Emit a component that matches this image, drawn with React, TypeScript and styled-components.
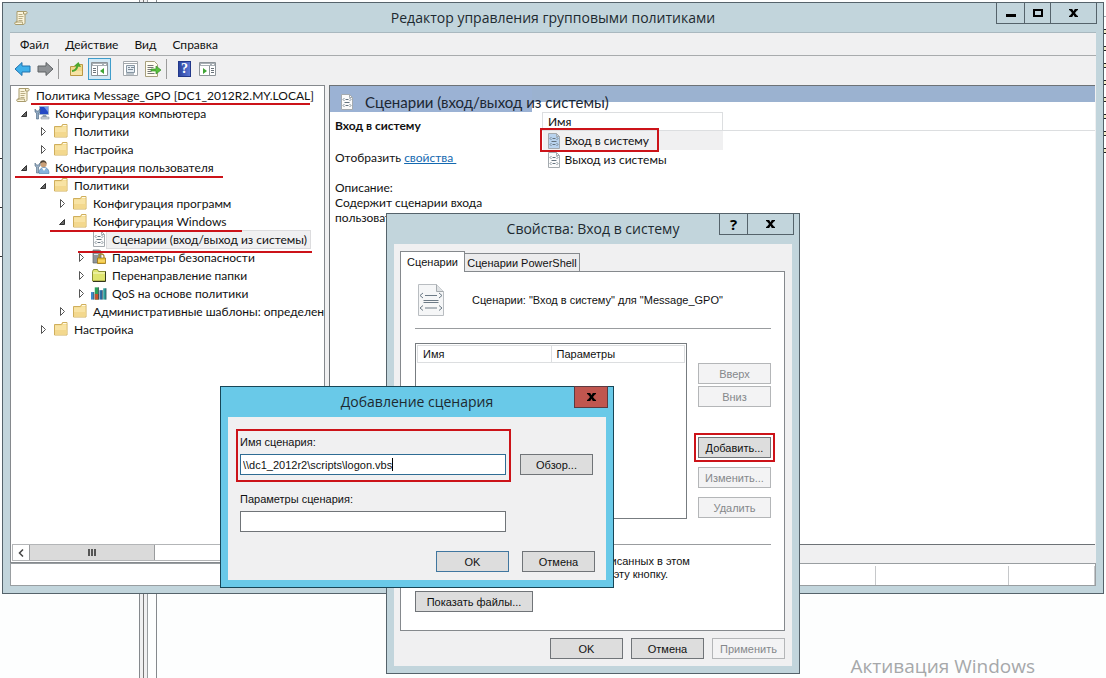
import React from 'react';
import styled, { createGlobalStyle, css } from 'styled-components';

const ui = '"Open Sans", "Noto Sans", sans-serif';
const compact = 'Lato, "Open Sans", sans-serif';
const classic = '"Liberation Sans", Arial, sans-serif';
const red = '#cc1319';

const GlobalStyle = createGlobalStyle`
  * { box-sizing: border-box; }
  body { margin: 0; background: #fdfefe; color: #111; font: 12px/18px ${ui}; }
  button, input { font: inherit; color: inherit; margin: 0; }
`;

/* ---------- desktop ---------- */

const Desktop = styled.main`
  position: relative;
  min-height: 100vh;
  overflow: hidden;
`;

const BackWindow = styled.div`
  display: flex;
  justify-content: space-between;
  height: 100vh;
`;

const BackEdge = styled.div`
  width: 2px;
  padding-top: 158px;
  display: flex;
  flex-direction: column;
  gap: 48px;
`;

const BackRight = styled.div`
  width: 2px;
  margin-top: 16px;
  height: 140px;
  border-top: 1px solid #9aa7ad;
  background: repeating-linear-gradient(#fff 0 12px, #222 12px 13px, #f3edc9 13px 16px, #222 16px 17px);
`;

const Tick = styled.i`
  height: 1px;
  background: #333;
`;

const BackSplit = styled.div`
  flex: 1;
  display: flex;
  padding-left: 137px;
`;

const Rule = styled.i<{ $gap: number; $tone: string }>`
  width: 1px;
  margin-right: ${(p) => p.$gap}px;
  background: ${(p) => p.$tone};
`;

const Gutter = styled.i`
  width: 3px;
  background: #f0f0f1;
`;

const Watermark = styled.p`
  position: absolute;
  right: 71px;
  bottom: 0;
  margin: 0;
  font-size: 19px;
  line-height: 24px;
  color: #a6a8aa;
`;

/* ---------- windows ---------- */

type Tone = 'grey' | 'blue';

const Frame = styled.section<{ $tone: Tone }>`
  position: absolute;
  display: flex;
  flex-direction: column;
  padding: 0 7px 7px;
  border: 1px solid ${(p) => (p.$tone === 'blue' ? '#174657' : '#55636b')};
  background: ${(p) => (p.$tone === 'blue' ? '#69c9e8' : '#c2d5dc')};
`;

const MainFrame = styled(Frame)`
  left: 2px;
  right: 2px;
  top: 2px;
  bottom: 84px;
`;

const PropsFrame = styled(Frame)`
  left: 386px;
  top: 213px;
  width: 414px;
`;

const AddFrame = styled(Frame)`
  left: 220px;
  top: 386px;
  width: 394px;
`;

const TitleBar = styled.header<{ $height?: number }>`
  position: relative;
  display: flex;
  align-items: center;
  justify-content: center;
  height: ${(p) => p.$height ?? 30}px;
  flex: none;
`;

const Title = styled.h1`
  margin: 0;
  font-size: 14px;
  line-height: 20px;
  font-weight: 400;
  color: #1d2a30;
`;

const AppIcon = styled.span`
  position: absolute;
  left: 3px;
  top: 7px;
  display: flex;
`;

const Controls = styled.div<{ $right: number }>`
  position: absolute;
  top: -1px;
  right: ${(p) => p.$right}px;
  display: flex;
`;

const Control = styled.button<{ $width: number; $danger?: boolean }>`
  display: flex;
  align-items: center;
  justify-content: center;
  width: ${(p) => p.$width}px;
  height: 22px;
  margin-left: -1px;
  padding: 0;
  border: 1px solid ${(p) => (p.$danger ? '#5c3a40' : '#55636b')};
  background: ${(p) => (p.$danger ? '#c0564f' : 'transparent')};
  font: 700 15px/18px ${ui};
  color: #000;
`;

const Client = styled.div`
  flex: 1;
  min-height: 0;
  display: flex;
  flex-direction: column;
  background: #f0f0f1;
`;

/* ---------- main window ---------- */

const MenuBar = styled.nav`
  display: flex;
  gap: 16px;
  height: 24px;
  padding: 1px 10px 0;
  border-top: 1px solid #a9b8bf;
  border-bottom: 1px solid #a8abad;
  font-family: ${compact};
`;

const MenuItem = styled.button`
  padding: 0;
  border: 0;
  background: none;
  line-height: 18px;
`;

const Toolbar = styled.div`
  display: flex;
  align-items: center;
  height: 29px;
  padding: 0 1px 3px;
`;

const Tool = styled.button<{ $on?: boolean }>`
  display: flex;
  align-items: center;
  justify-content: center;
  width: 23px;
  height: 22px;
  padding: 0;
  border: 1px solid ${(p) => (p.$on ? '#3f9dcb' : 'transparent')};
  background: ${(p) => (p.$on ? '#d3e9f5' : 'none')};
  margin-right: ${(p) => (p.$on ? 8 : 0)}px;
`;

const ToolSep = styled.i`
  width: 1px;
  height: 20px;
  margin: 0 6px 0 1px;
  background: #9b9b9b;
`;

const Panes = styled.div`
  flex: 1;
  min-height: 0;
  display: flex;
  gap: 4px;
`;

const TreePane = styled.div`
  display: flex;
  flex-direction: column;
  width: 315px;
  flex: none;
  border: 1px solid #85898d;
  background: #fff;
  font-family: ${compact};
`;

const Tree = styled.ul`
  flex: 1;
  margin: 0;
  padding: 0;
  list-style: none;
`;

const TreeRow = styled.li<{ $level: number }>`
  position: relative;
  display: flex;
  align-items: center;
  height: 18px;
  padding-left: ${(p) => (p.$level ? 19 * p.$level - 11 : 4)}px;
`;

const Arrow = styled.span`
  display: flex;
  flex: none;
  width: 15px;
`;

const IconBox = styled.span`
  display: flex;
  flex: none;
  width: 16px;
`;

const NodeLabel = styled.span<{ $selected?: boolean }>`
  white-space: nowrap;
  line-height: 17px;
  padding: 0 3px 0 5px;
  ${(p) =>
    p.$selected &&
    css`
      background: #f0f0f1;
      box-shadow: 0 0 0 1px #dcdcde;
    `}
`;

const Underline = styled.i<{ $x: number; $w: number; $y: number }>`
  position: absolute;
  z-index: 1;
  left: ${(p) => p.$x}px;
  top: ${(p) => p.$y}px;
  width: ${(p) => p.$w}px;
  height: 2px;
  background: ${red};
`;

const ScrollBar = styled.div`
  display: flex;
  height: 17px;
  margin: 0 1px 1px;
  border: 1px solid #b3b5b7;
  background: #fff;
`;

const ScrollArrow = styled.button`
  display: flex;
  align-items: center;
  justify-content: center;
  width: 16px;
  padding: 0;
  border: 0;
  background: none;
`;

const Thumb = styled.div`
  display: flex;
  align-items: center;
  justify-content: center;
  gap: 1px;
  width: 126px;
  border: 1px solid #999b9d;
  border-width: 0 1px;
  background: #dadada;
`;

const Grip = styled.i`
  width: 2px;
  height: 7px;
  background: #555;
`;

const ResultPane = styled.div`
  flex: 1;
  display: flex;
  flex-direction: column;
  border-left: 1px solid #6d7276;
  border-top: 1px solid #6d7276;
  margin-right: 1px;
  background: #fff;
`;

const ResultHeader = styled.div`
  position: relative;
  z-index: 1;
  display: flex;
  align-items: center;
  gap: 10px;
  height: 26px;
  padding: 6px 9px 0;
  background: linear-gradient(90deg, #9bb2d4 0 202px, transparent 202px), linear-gradient(#9bb2d0 0 16px, transparent 16px);
`;

const ResultTitle = styled.h2`
  margin: 0;
  font-size: 15px;
  line-height: 20px;
  font-weight: 400;
  color: #1c2733;
  font-family: ${compact};
`;

const ResultBody = styled.div`
  flex: 1;
  display: flex;
  border-bottom: 1px solid #6d7276;
  font-family: ${compact};
`;

const Details = styled.div`
  width: 212px;
  flex: none;
  padding: 5px 5px 0;
  line-height: 15px;
  p, h3 { margin: 0; }
  h3 { font-size: 12px; line-height: 17px; }
`;

const PropLine = styled.p`
  padding: 16px 0 15px;
  a { color: #1469b0; }
`;

const DetailText = styled.p`
  width: 160px;
`;

const FileList = styled.table`
  flex: 1;
  align-self: flex-start;
  border-collapse: collapse;
  th, td { padding: 0; font-weight: 400; text-align: left; }
`;

const NameHead = styled.th`
  width: 180px;
  height: 18px;
  border: 1px solid #dcdee0;
  line-height: 17px;
`;

const RestHead = styled.th`
  border-bottom: 1px solid #dcdee0;
`;

const HeadText = styled.span`
  padding-left: 5px;
`;

const NameCell = styled.td<{ $on?: boolean }>`
  position: relative;
  background: ${(p) => (p.$on ? '#f0f0f1' : 'none')};
`;

const FileName = styled.div`
  display: flex;
  align-items: center;
  gap: 3px;
  height: 19px;
  padding-left: 3px;
`;

const Highlight = styled.i<{ $inset: string }>`
  position: absolute;
  inset: ${(p) => p.$inset};
  border: 2px solid ${red};
  pointer-events: none;
`;

const FootBand = styled.div`
  height: 18px;
  background: #f0f0f1;
`;

const StatusBar = styled.footer`
  display: flex;
  height: 23px;
  flex: none;
  border: 1px solid #999ea1;
  background: #fff;
`;

const StatusCell = styled.span<{ $width?: number }>`
  ${(p) => (p.$width ? `width: ${p.$width}px;` : 'flex: 1;')}
  border-right: 1px solid #c6c8ca;
  margin-top: 2px;
`;

/* ---------- dialogs ---------- */

const DialogBody = styled(Client)`
  font: 11px/14px ${classic};
`;

const PropsBody = styled(DialogBody)`
  padding: 7px 7px 7px 6px;
`;

const Tabs = styled.div`
  display: flex;
  align-items: flex-end;
  height: 20px;
`;

const Tab = styled.button<{ $on?: boolean }>`
  position: relative;
  padding: 0;
  border: 1px solid #85898d;
  border-bottom: 0;
  white-space: nowrap;
  ${(p) =>
    p.$on
      ? css`
          z-index: 1;
          width: 65px;
          height: 21px;
          margin-bottom: -1px;
          background: #fff;
        `
      : css`
          width: 116px;
          height: 18px;
          margin-left: -1px;
          background: #ececed;
        `}
`;

const TabPanel = styled.div`
  padding: 12px 13px 18px 14px;
  border: 1px solid #85898d;
  background: #fff;
`;

const Intro = styled.div`
  display: flex;
  align-items: center;
  gap: 28px;
  height: 33px;
  padding: 0 0 2px 3px;
`;

const Divider = styled.hr`
  width: 100%;
  height: 1px;
  margin: 0;
  border: 0;
  background: #999c9f;
`;

const ScriptArea = styled.div`
  display: flex;
  justify-content: space-between;
  margin: 14px 0 25px;
`;

const ScriptBox = styled.div`
  width: 272px;
  height: 176px;
  padding: 1px;
  border: 1px solid #777c80;
`;

const ScriptTable = styled.table`
  width: 100%;
  table-layout: fixed;
  border-collapse: collapse;
  th {
    height: 17px;
    padding: 0 5px;
    border: 1px solid #dcdee0;
    font-weight: 400;
    text-align: left;
  }
`;

const Side = styled.div`
  display: flex;
  flex-direction: column;
  justify-content: space-between;
  padding: 20px 0 1px;
`;

const Stack = styled.div<{ $gap: number }>`
  position: relative;
  display: flex;
  flex-direction: column;
  gap: ${(p) => p.$gap}px;
`;

const Anchor = styled.div`
  position: relative;
`;

const Push = styled.button<{ $wide?: boolean; $primary?: boolean }>`
  display: block;
  width: ${(p) => (p.$wide ? 118 : 73)}px;
  height: 21px;
  padding: 0;
  border: 1px solid ${(p) => (p.$primary ? '#40769f' : '#707478')};
  background: #dddddd;
  white-space: nowrap;
  line-height: 14px;
  &:disabled {
    border-color: #b4b6b8;
    background: #f3f3f4;
    color: #85888b;
  }
`;

const Hint = styled.p`
  margin: 10px 0 10px;
  line-height: 13px;
  white-space: nowrap;
`;

const Actions = styled.div<{ $gap: number }>`
  display: flex;
  justify-content: flex-end;
  gap: ${(p) => p.$gap}px;
`;

const AddBody = styled(DialogBody)`
  padding: 12px 11px 8px 8px;
`;

const FieldRow = styled.div`
  display: flex;
  align-items: flex-end;
  gap: 9px;
  padding-bottom: 6px;
`;

const MarkedField = styled.div`
  width: 275px;
  padding: 4px 3px 5px 2px;
  border: 2px solid ${red};
`;

const PlainField = styled.div`
  width: 275px;
  padding: 4px 5px 19px 4px;
`;

const Label = styled.label`
  display: block;
  line-height: 14px;
  padding-bottom: 5px;
`;

const InputBox = styled.div<{ $focus?: boolean }>`
  display: flex;
  align-items: center;
  height: 21px;
  padding: 0 2px;
  border: 1px solid ${(p) => (p.$focus ? '#2f6c94' : '#707478')};
  background: #fff;
`;

const TextInput = styled.input<{ $fit?: boolean }>`
  ${(p) => (p.$fit ? 'field-sizing: content;' : 'flex: 1;')}
  height: 18px;
  padding: 0;
  border: 0;
  outline: 0;
  background: none;
`;

const Caret = styled.i`
  width: 1px;
  height: 13px;
  background: #000;
`;

const BrowseSlot = styled.div`
  padding-bottom: 7px;
`;

const Spacer = styled.div`
  height: 11px;
`;

const Footer = styled.div`
  padding-top: 7px;
`;

/* ---------- icons ---------- */

const ScrollIcon = () => (
  <svg width="16" height="16" viewBox="0 0 16 16">
    <path d="M4 1.500h9c1.600 0 1.600 2.500 0 2.500h-1v8.500c0 1.500-1 2-2 2H3c-1.800 0-1.800-2.500 0-2.500h1z" fill="#fbf5dc" stroke="#a89b6c" />
    <path d="M12 4h-1.500V2M3 12h6.500c0 1 0 2 1 2.500" fill="none" stroke="#a89b6c" />
    <path d="M5.500 4.500h4M5.500 6.500h5M5.500 8.500h4M5.500 10.500h4" stroke="#b9ad85" />
  </svg>
);

const FolderIcon = () => (
  <svg width="16" height="16" viewBox="0 0 16 16">
    <path d="M1.500 3.500h7l1-2h4.500v12.500h-12.500z" fill="#f3d98c" stroke="#cfae5c" />
    <path d="M10 2.500h3.500" stroke="#fffbe8" />
    <path d="M2 4.500h7l1-1h3.500v10H2z" fill="#f8e3a4" />
    <path d="M2 9h11.500v4.500H2z" fill="#f3d88e" />
  </svg>
);

const GreenFolderIcon = () => (
  <svg width="16" height="16" viewBox="0 0 16 16">
    <path d="M1.500 4.500l1-2h4l1 2h7v9.500h-13z" fill="#dfe56f" stroke="#8b9235" />
    <path d="M14.500 4.500V14.500H2" fill="none" stroke="#33361c" />
    <path d="M2 6h12" stroke="#f8facb" />
  </svg>
);

const ComputerIcon = () => (
  <svg width="16" height="16" viewBox="0 0 16 16">
    <path d="M5.500 1.500h9v8h-9z" fill="#2449c4" stroke="#9db2cc" />
    <path d="M10 2h4v5z" fill="#6e97ee" />
    <path d="M9 10h3l1 2H8z" fill="#93a0ae" />
    <path d="M7 12h8v2H7z" fill="#cfd6dc" stroke="#7f8b97" strokeWidth=".5" />
    <path d="M1 4v3l1.500 1v6h2V8L6 7V4L4.500 6h-2z" fill="#8fa9c2" stroke="#46627d" strokeWidth=".6" />
  </svg>
);

const UserIcon = () => (
  <svg width="16" height="16" viewBox="0 0 16 16">
    <path d="M5 14.500c0-4 2-6 5-6s5 2 5 6z" fill="#86b4dc" stroke="#4a7baa" strokeWidth=".6" />
    <circle cx="9.500" cy="5" r="3.200" fill="#c99f78" />
    <path d="M6 4.500C6 0 12.500 0 12.500 5c-1.500-2-3-2.500-6.500-.5z" fill="#4d4338" />
    <path d="M8 9l2 3 2-3z" fill="#fff" />
    <path d="M1 4v3l1.500 1v6h2V8L6 7V4L4.500 6h-2z" fill="#9ab0c5" stroke="#4f6880" strokeWidth=".6" />
  </svg>
);

const ServerLockIcon = () => (
  <svg width="16" height="16" viewBox="0 0 16 16">
    <path d="M2 1h6l2 1v12H2z" fill="#8e9499" stroke="#5e6469" strokeWidth=".7" />
    <path d="M3 3.500h4M3 5.500h4" stroke="#dfe3e6" />
    <path d="M8 9V7.500a2.500 2.500 0 015 0V9" fill="none" stroke="#a98a2e" strokeWidth="1.300" />
    <path d="M6.500 9h8v5.500h-8z" fill="#f1c53c" stroke="#9a7414" strokeWidth=".8" />
    <path d="M7 12h7" stroke="#fbe28a" />
  </svg>
);

const BarsIcon = () => (
  <svg width="17" height="16" viewBox="0 0 17 16">
    <path d="M0 7h3v8H0z" fill="#3c8ccd" />
    <path d="M4 2h4v13H4z" fill="#2aa05a" />
    <path d="M4 9h4v6H4z" fill="#c4532e" />
    <path d="M9 5h3v10H9z" fill="#2d6fa8" />
    <path d="M13 3h3v12h-3z" fill="#2f9f9a" />
    <path d="M3 7v8M8 2v13M12 5v10M16 3v12" stroke="#1d2f3d" strokeWidth=".7" />
  </svg>
);

const ScriptIcon = ({ tint = '#fbfbfb', large = false }: { tint?: string; large?: boolean }) =>
  large ? (
    <svg width="26" height="32" viewBox="0 0 26 32">
      <path d="M.5.500h18l7 7v24H.5z" fill="#f5f6f7" stroke="#b9bdc1" />
      <path d="M18.500.500v7h7" fill="#dfe2e4" stroke="#a5aaae" />
      <path d="M7 11.500h12M5.500 16.500h15M5.500 18.500h15M7 24h12" stroke="#6c7a86" />
      <path d="M5 9L2 11.500 5 14M21 9l3 2.500-3 2.500M5 21.500L2 24l3 2.500M21 21.500l3 2.500-3 2.500" fill="none" stroke="#6c7a86" />
    </svg>
  ) : (
    <svg width="16" height="16" viewBox="0 0 16 16">
      <path d="M2.500.500h8l3 3v12h-11z" fill={tint} stroke="#a4aaaf" />
      <path d="M10.500.500v3h3" fill="none" stroke="#a4aaaf" />
      <path d="M6.500 5.500h3M5.500 8.500h5M6.500 11.500h3" stroke="#64737f" />
      <path d="M5.500 4L4 5.500 5.500 7M10.500 4L12 5.500 10.500 7M5.500 10L4 11.500 5.500 13M10.500 10l1.500 1.500-1.500 1.500" fill="none" stroke="#64737f" strokeWidth=".8" />
    </svg>
  );

const ArrowIcon = ({ forward = false }: { forward?: boolean }) => (
  <svg width="17" height="16" viewBox="0 0 17 16">
    <path
      d={forward ? 'M9 1.500L16 8 9 14.500V11H1V5h8z' : 'M8 1.500L1 8l7 6.500V11h8V5H8z'}
      fill={forward ? '#8f9295' : '#3fb0ea'}
      stroke={forward ? '#5f6265' : '#2172ae'}
      strokeLinejoin="round"
    />
  </svg>
);

const FolderUpIcon = () => (
  <svg width="16" height="16" viewBox="0 0 16 16">
    <path d="M1.500 5.500h5l1-2h6v11h-12z" fill="#f2d88c" stroke="#bb9843" />
    <path d="M2 10h11v4H2z" fill="#f7e3a5" />
    <path d="M3 10c3 0 4.500-1.500 5.500-5" fill="none" stroke="#4ca72f" strokeWidth="2" />
    <path d="M5 5l4.500-4L12 6z" fill="#4ca72f" />
  </svg>
);

const PanelIcon = ({ right = false }: { right?: boolean }) => (
  <svg width="17" height="14" viewBox="0 0 17 14">
    <path d="M.5.500h16v13H.5z" fill="#fff" stroke="#8d9499" />
    <path d="M1 1h15v3H1z" fill="#a9b0b5" />
    <path d="M2 2.500h9M13 2.500h2" stroke="#fff" />
    <path d={right ? 'M10.500 4v9' : 'M6.500 4v9'} stroke="#8d9499" />
    <path d={right ? 'M12 6.500h3M12 8.500h3M12 10.500h3' : 'M2 6.500h3M2 8.500h3M2 10.500h3'} stroke="#6b747b" />
    <path d={right ? 'M4 6l4 3-4 3z' : 'M13 6l-4 3 4 3z'} fill="#3fa535" />
  </svg>
);

const SheetIcon = () => (
  <svg width="16" height="16" viewBox="0 0 16 16">
    <path d="M.5.500h14v14h-14z" fill="#fff" stroke="#a4a9ad" />
    <path d="M1 2.500h13" stroke="#a4a9ad" />
    <path d="M3.500 4.500h8v7h-8z" fill="#e6edf3" stroke="#8796a3" />
    <path d="M5 6.500h2M8 6.500h3M5 8.500h5M3 13h8" stroke="#7b8a97" />
  </svg>
);

const ExportIcon = () => (
  <svg width="17" height="16" viewBox="0 0 17 16">
    <path d="M.5.500h9l3 3v12H.5z" fill="#fffdf0" stroke="#a79f7d" />
    <path d="M2.500 4.500h6M2.500 6.500h6M2.500 8.500h4M2.500 10.500h4M2.500 12.500h7" stroke="#777" />
    <path d="M6 8h5V5l5 4-5 4v-3H6z" fill="#58c03c" stroke="#35902a" strokeWidth=".7" />
  </svg>
);

const HelpBox = styled.span`
  display: flex;
  align-items: center;
  justify-content: center;
  width: 13px;
  height: 16px;
  border: 1px solid #22388a;
  background: linear-gradient(90deg, #2c459f, #5a76d4);
  color: #fff;
  font: 700 14px/14px "Liberation Serif", serif;
`;

const TwistIcon = ({ open }: { open: boolean }) => (
  <svg width="12" height="14" viewBox="0 0 12 14">
    {open ? <path d="M7.500 5.500v5h-5z" fill="#666" stroke="#333" /> : <path d="M3.500 3.500v8l4-4z" fill="#fff" stroke="#555" />}
  </svg>
);

const MinIcon = () => (
  <svg width="10" height="10" viewBox="0 0 10 10"><path d="M0 6h10v3H0z" /></svg>
);
const MaxIcon = () => (
  <svg width="10" height="10" viewBox="0 0 10 10"><path d="M1 2h8v6H1z" fill="none" stroke="#000" strokeWidth="2" /></svg>
);
const CloseIcon = () => (
  <svg width="9" height="8" viewBox="0 0 9 8">
    <path d="M0 0h3.200l1.300 2.300L5.800 0H9v1.200H8.200L6 4l2.200 2.800H9V8H5.800L4.500 5.700 3.200 8H0V6.800h.8L3 4 .8 1.200H0z" />
  </svg>
);

/* ---------- data ---------- */

type Node = {
  level: number;
  label: string;
  icon: React.ReactNode;
  open?: boolean;
  selected?: boolean;
  mark?: [number, number, number];
};

const nodes: Node[] = [
  { level: 0, label: 'Политика Message_GPO [DC1_2012R2.MY.LOCAL]', icon: <ScrollIcon />, mark: [20, 279, 17] },
  { level: 1, label: 'Конфигурация компьютера', icon: <ComputerIcon />, open: true },
  { level: 2, label: 'Политики', icon: <FolderIcon />, open: false },
  { level: 2, label: 'Настройка', icon: <FolderIcon />, open: false },
  { level: 1, label: 'Конфигурация пользователя', icon: <UserIcon />, open: true, mark: [4, 208, 18] },
  { level: 2, label: 'Политики', icon: <FolderIcon />, open: true },
  { level: 3, label: 'Конфигурация программ', icon: <FolderIcon />, open: false },
  { level: 3, label: 'Конфигурация Windows', icon: <FolderIcon />, open: true, mark: [39, 192, 18] },
  { level: 4, label: 'Сценарии (вход/выход из системы)', icon: <ScriptIcon />, selected: true, mark: [67, 234, 21] },
  { level: 4, label: 'Параметры безопасности', icon: <ServerLockIcon />, open: false },
  { level: 4, label: 'Перенаправление папки', icon: <GreenFolderIcon />, open: false },
  { level: 4, label: 'QoS на основе политики', icon: <BarsIcon />, open: false },
  { level: 3, label: 'Административные шаблоны: определен', icon: <FolderIcon />, open: false },
  { level: 2, label: 'Настройка', icon: <FolderIcon />, open: false },
];

const MainWindow = () => (
  <MainFrame $tone="grey">
    <TitleBar $height={29}>
      <AppIcon><ScrollIcon /></AppIcon>
      <Title>Редактор управления групповыми политиками</Title>
      <Controls $right={-1}>
        <Control $width={29} aria-label="Свернуть"><MinIcon /></Control>
        <Control $width={27} aria-label="Развернуть"><MaxIcon /></Control>
        <Control $width={47} aria-label="Закрыть"><CloseIcon /></Control>
      </Controls>
    </TitleBar>
    <Client>
      <MenuBar>
        {['Файл', 'Действие', 'Вид', 'Справка'].map((m) => <MenuItem key={m}>{m}</MenuItem>)}
      </MenuBar>
      <Toolbar>
        <Tool aria-label="Назад"><ArrowIcon /></Tool>
        <Tool aria-label="Вперед"><ArrowIcon forward /></Tool>
        <ToolSep />
        <Tool aria-label="Вверх"><FolderUpIcon /></Tool>
        <Tool $on aria-label="Дерево консоли"><PanelIcon /></Tool>
        <Tool aria-label="Свойства"><SheetIcon /></Tool>
        <Tool aria-label="Экспорт"><ExportIcon /></Tool>
        <ToolSep />
        <Tool aria-label="Справка"><HelpBox>?</HelpBox></Tool>
        <Tool aria-label="Панель действий"><PanelIcon right /></Tool>
      </Toolbar>
      <Panes>
        <TreePane>
          <Tree>
            {nodes.map((n, i) => (
              <TreeRow key={i} $level={n.level}>
                {n.level > 0 && <Arrow>{n.open !== undefined && <TwistIcon open={n.open} />}</Arrow>}
                <IconBox>{n.icon}</IconBox>
                <NodeLabel $selected={n.selected}>{n.label}</NodeLabel>
                {n.mark && <Underline $x={n.mark[0]} $w={n.mark[1]} $y={n.mark[2]} />}
              </TreeRow>
            ))}
          </Tree>
          <ScrollBar>
            <ScrollArrow aria-label="Прокрутить влево">
              <svg width="6" height="8" viewBox="0 0 6 8"><path d="M5 .5L1.500 4 5 7.500" fill="none" stroke="#444" strokeWidth="1.500" /></svg>
            </ScrollArrow>
            <Thumb><Grip /><Grip /><Grip /></Thumb>
          </ScrollBar>
        </TreePane>
        <ResultPane>
          <ResultHeader>
            <ScriptIcon />
            <ResultTitle>Сценарии (вход/выход из системы)</ResultTitle>
          </ResultHeader>
          <ResultBody>
            <Details>
              <h3>Вход в систему</h3>
              <PropLine>Отобразить <a href="#properties">свойства&nbsp;</a></PropLine>
              <DetailText>Описание:<br />Содержит сценарии входа пользователя.</DetailText>
            </Details>
            <FileList>
              <thead>
                <tr>
                  <NameHead><HeadText>Имя</HeadText></NameHead>
                  <RestHead />
                </tr>
              </thead>
              <tbody>
                <tr>
                  <NameCell $on>
                    <FileName><ScriptIcon tint="#b9d3ee" />Вход в систему</FileName>
                    <Highlight $inset="-3px 64px -2px -3px" />
                  </NameCell>
                  <td />
                </tr>
                <tr>
                  <NameCell><FileName><ScriptIcon />Выход из системы</FileName></NameCell>
                  <td />
                </tr>
              </tbody>
            </FileList>
          </ResultBody>
          <FootBand />
        </ResultPane>
      </Panes>
      <StatusBar>
        <StatusCell />
        <StatusCell $width={133} />
        <StatusCell $width={86} />
      </StatusBar>
    </Client>
  </MainFrame>
);

const PropertiesDialog = () => (
  <PropsFrame $tone="grey" role="dialog" aria-label="Свойства: Вход в систему">
    <TitleBar>
      <Title>Свойства: Вход в систему</Title>
      <Controls $right={-2}>
        <Control $width={29}>?</Control>
        <Control $width={47} aria-label="Закрыть"><CloseIcon /></Control>
      </Controls>
    </TitleBar>
    <PropsBody>
      <Tabs role="tablist">
        <Tab $on role="tab" aria-selected>Сценарии</Tab>
        <Tab role="tab">Сценарии PowerShell</Tab>
      </Tabs>
      <TabPanel>
        <Intro>
          <ScriptIcon large />
          <span>Сценарии: "Вход в систему" для "Message_GPO"</span>
        </Intro>
        <Spacer />
        <Divider />
        <ScriptArea>
          <ScriptBox>
            <ScriptTable>
              <thead><tr><th>Имя</th><th>Параметры</th></tr></thead>
            </ScriptTable>
          </ScriptBox>
          <Side>
            <Stack $gap={2}>
              <Push disabled>Вверх</Push>
              <Push disabled>Вниз</Push>
            </Stack>
            <Stack $gap={9}>
              <Anchor>
                <Push>Добавить...</Push>
                <Highlight $inset="-4px" />
              </Anchor>
              <Push disabled>Изменить...</Push>
              <Push disabled>Удалить</Push>
            </Stack>
          </Side>
        </ScriptArea>
        <Divider />
        <Hint>
          Для просмотра файлов сценариев, описанных в этом<br />
          объекте групповой политики, нажмите эту кнопку.
        </Hint>
        <Push $wide>Показать файлы...</Push>
      </TabPanel>
      <Footer>
        <Actions $gap={8}>
          <Push>OK</Push>
          <Push>Отмена</Push>
          <Push disabled>Применить</Push>
        </Actions>
      </Footer>
    </PropsBody>
  </PropsFrame>
);

const AddDialog = () => (
  <AddFrame $tone="blue" role="dialog" aria-label="Добавление сценария">
    <TitleBar>
      <Title>Добавление сценария</Title>
      <Controls $right={-2}>
        <Control $width={34} $danger aria-label="Закрыть"><CloseIcon /></Control>
      </Controls>
    </TitleBar>
    <AddBody>
      <FieldRow>
        <MarkedField>
          <Label htmlFor="script-name">Имя сценария:</Label>
          <InputBox $focus>
            <TextInput $fit id="script-name" defaultValue="\\dc1_2012r2\scripts\logon.vbs" />
            <Caret />
          </InputBox>
        </MarkedField>
        <BrowseSlot><Push>Обзор...</Push></BrowseSlot>
      </FieldRow>
      <PlainField>
        <Label htmlFor="script-params">Параметры сценария:</Label>
        <InputBox><TextInput id="script-params" /></InputBox>
      </PlainField>
      <Actions $gap={13}>
        <Push $primary>OK</Push>
        <Push>Отмена</Push>
      </Actions>
    </AddBody>
  </AddFrame>
);

export default function App() {
  return (
    <>
      <GlobalStyle />
      <Desktop>
        <BackWindow>
          <BackEdge><Tick /><Tick /><Tick /></BackEdge>
          <BackSplit>
            <Rule $gap={0} $tone="#85898d" />
            <Gutter />
            <Rule $gap={0} $tone="#777" />
            <Gutter />
            <Rule $gap={8} $tone="#999da0" />
            <Rule $gap={0} $tone="#85898d" />
          </BackSplit>
          <BackRight />
        </BackWindow>
        <Watermark>Активация Windows</Watermark>
        <MainWindow />
        <PropertiesDialog />
        <AddDialog />
      </Desktop>
    </>
  );
}
